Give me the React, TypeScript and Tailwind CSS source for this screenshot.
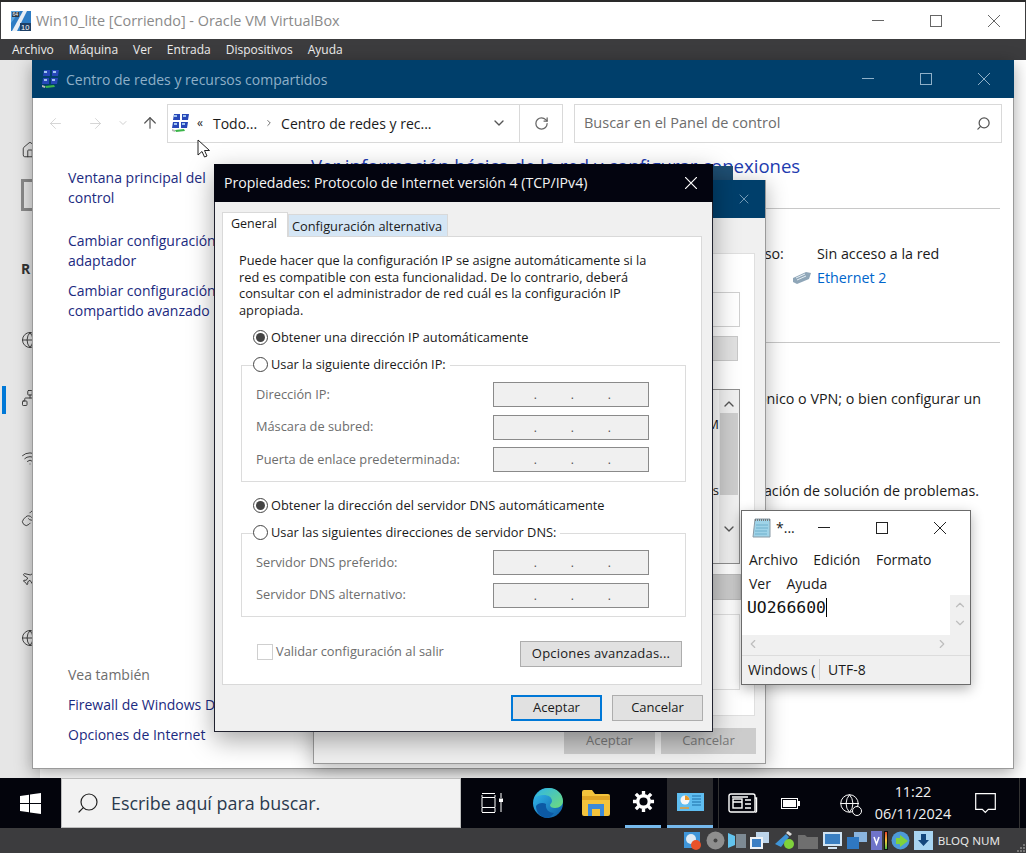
import React from 'react';
import { ArrowLeft, ArrowRight, ArrowUp, ChevronDown, ChevronUp, ChevronLeft, ChevronRight, RotateCw, X, Home, Globe, Wifi, Search, Plane, Network, Link } from 'lucide-react';

const NetIcon: React.FC = () => (
  <svg width="20" height="20" viewBox="0 0 20 20" className="shrink-0">
    <path d="M3 1h6v6H2z M11 1h7l-1 6h-6z M2 9h6v6H1z M10 9h7l-1 6h-6z" fill="#2747b8" />
    <path d="M3 2h3v2H3z M12 2h3v2h-3z M3 10h3v2H3z M11 10h3v2h-3z" fill="#9fc4f0" />
    <path d="M4 17l9-1 1 2-9 1z" fill="#3cb54a" />
    <path d="M1 16l3 1v2l-3-1z" fill="#b8b8b8" />
  </svg>
);

const VBoxIcon: React.FC = () => (
  <svg width="20" height="20" viewBox="0 0 20 20" className="shrink-0">
    <rect width="20" height="20" fill="#2d7cc4" />
    <path d="M0 0h9L0 12z" fill="#5aa5e0" />
    <path d="M12 0h4L6 20H1z" fill="#e8eef5" />
    <rect x="9" y="12" width="11" height="8" fill="#1d3f66" />
    <rect x="1" y="1" width="7" height="5" fill="#2b3a4a" />
    <text x="1.500" y="5.300" fontSize="5" fill="#fff" fontFamily="Liberation Sans">64</text>
    <text x="10" y="19" fontSize="7.500" fill="#fff" fontFamily="Liberation Sans">10</text>
  </svg>
);

// Sharp-cornered caption buttons: lucide's Square is rounded, Windows' is not.
const WinControls: React.FC<{ color: string; className?: string }> = ({ color, className }) => (
  <div className={`flex items-center gap-[46px] ${className ?? ''}`}>
    <svg width="12" height="12" viewBox="0 0 12 12" fill="none" stroke={color}><path d="M0 5.500h12" /></svg>
    <svg width="12" height="12" viewBox="0 0 12 12" fill="none" stroke={color}><rect x=".5" y=".5" width="11" height="11" /></svg>
    <svg width="12" height="12" viewBox="0 0 12 12" fill="none" stroke={color}><path d="M0 0l12 12M12 0L0 12" /></svg>
  </div>
);

const Cursor: React.FC = () => (
  <svg width="14" height="20" viewBox="0 0 14 20" className="absolute left-[197px] top-[139px] z-40">
    <path d="M1 1v15l4-3.500 2.500 5.500 2.500-1-2.500-5.500h5z" fill="#fff" stroke="#222" strokeWidth="1" />
  </svg>
);

const Radio: React.FC<{ on?: boolean; label: string }> = ({ on, label }) => (
  <div className="flex items-center h-[17px] bg-white pr-1 w-fit">
    <span className="w-[15px] h-[15px] rounded-full border border-[#444] bg-white flex items-center justify-center mr-[3px]">
      {on && <span className="w-[9px] h-[9px] rounded-full bg-[#444]" />}
    </span>
    <span className="text-[12.800px] text-[#1a1a1a] whitespace-nowrap">{label}</span>
  </div>
);

const IpField: React.FC<{ label: string }> = ({ label }) => (
  <div className="flex items-center justify-between h-[25px]">
    <span className="text-[12.800px] text-[#6d6d6d] whitespace-nowrap">{label}</span>
    <div className="w-[156px] h-[25px] border border-[#8a8a8a] bg-[#f0f0f0] grid grid-cols-4 pl-[6px]">
      {[0, 1, 2].map((i) => (
        <span key={i} className="justify-self-end text-[12px] text-[#555] leading-[24px]">.</span>
      ))}
    </div>
  </div>
);

const DialogButton: React.FC<{ label: string; primary?: boolean; className?: string }> = ({ label, primary, className }) => (
  <div
    className={`h-[26px] flex items-center justify-center bg-[#e1e1e1] text-[13px] text-[#1a1a1a] border ${
      primary ? 'border-2 border-[#0078d7]' : 'border-[#adadad]'
    } ${className ?? ''}`}
  >
    {label}
  </div>
);

const PropsDialog: React.FC = () => (
  <div className="absolute left-[214px] top-[164px] w-[499px] h-[568px] z-30 bg-[#f0f0f0] border border-[#20222e] border-t-0 shadow-[0_8px_24px_rgba(0,0,0,0.35)] flex flex-col">
    <div className="h-[38px] bg-[#03040f] text-white flex items-center justify-between pl-[10px] pr-[16px] pb-[1px] -mx-px shrink-0">
      <span className="text-[14.100px] whitespace-nowrap text-[#f4f4f4]">Propiedades: Protocolo de Internet versión 4 (TCP/IPv4)</span>
      <svg width="12" height="12" viewBox="0 0 12 12" fill="none" stroke="#fff" strokeWidth="1.200"><path d="M0 0l12 12M12 0L0 12" /></svg>
    </div>
    <div className="flex items-end pl-[7px] h-[34px] shrink-0">
      <div className="w-[66px] h-[25px] bg-white border border-[#d9d9d9] border-b-0 text-[12.500px] text-[#1a1a1a] pl-2 leading-[21px] relative top-px z-10">General</div>
      <div className="w-[160px] h-[22px] bg-[#d5e6f5] border border-[#d9d9d9] border-b-0 text-[12.800px] text-[#1a1a1a] pl-[3px] leading-[22px] whitespace-nowrap">Configuración alternativa</div>
    </div>
    <div className="ml-[7px] w-[480px] h-[449px] bg-white border border-[#d9d9d9] flex flex-col px-[16px] shrink-0">
      <p className="mt-[15px] text-[12.800px] leading-[16.500px] text-[#1a1a1a] whitespace-nowrap">
        Puede hacer que la configuración IP se asigne automáticamente si la<br />
        red es compatible con esta funcionalidad. De lo contrario, deberá<br />
        consultar con el administrador de red cuál es la configuración IP<br />
        apropiada.
      </p>
      <div className="mt-[11px] ml-[14px]"><Radio on label="Obtener una dirección IP automáticamente" /></div>
      <div className="mt-[10px] ml-[14px] relative z-10"><Radio label="Usar la siguiente dirección IP:" /></div>
      <div className="-mt-[8px] ml-[2px] -mr-[1px] h-[117px] border border-[#dcdcdc] pt-[16px] pl-[14px] pr-[36px] flex flex-col gap-[7.500px]">
        <IpField label="Dirección IP:" />
        <IpField label="Máscara de subred:" />
        <IpField label="Puerta de enlace predeterminada:" />
      </div>
      <div className="mt-[15px] ml-[14px]"><Radio on label="Obtener la dirección del servidor DNS automáticamente" /></div>
      <div className="mt-[10px] ml-[14px] relative z-10"><Radio label="Usar las siguientes direcciones de servidor DNS:" /></div>
      <div className="-mt-[8px] ml-[2px] -mr-[1px] h-[84px] border border-[#dcdcdc] pt-[16px] pl-[14px] pr-[36px] flex flex-col gap-[7.500px]">
        <IpField label="Servidor DNS preferido:" />
        <IpField label="Servidor DNS alternativo:" />
      </div>
      <div className="mt-[24px] ml-[18px] flex items-center justify-between mr-[3px]">
        <div className="flex items-center pb-[4px]">
          <span className="w-[16px] h-[16px] border border-[#cfcfcf] mr-[3px]" />
          <span className="text-[12.800px] text-[#6d6d6d]">Validar configuración al salir</span>
        </div>
        <DialogButton label="Opciones avanzadas..." className="w-[162px] tracking-[0.2px]" />
      </div>
    </div>
    <div className="flex justify-end gap-[10px] pr-[9px] mt-[10px]">
      <DialogButton primary label="Aceptar" className="w-[91px]" />
      <DialogButton label="Cancelar" className="w-[91px]" />
    </div>
  </div>
);

const BackWindow: React.FC = () => (
  <>
    <div className="absolute left-[700px] top-[166px] w-[33px] h-[16px] bg-[#1f5075] z-10" />
    <div className="absolute left-[313px] top-[180px] w-[453px] h-[584px] z-20 bg-[#f0f0f0] border border-[#9a9a9a] border-t-0 shadow-[0_4px_20px_rgba(0,0,0,0.3)] flex flex-col">
      <div className="h-[38px] bg-[#003f6b] flex items-center justify-end pr-[13px] shrink-0">
        <X size={16} strokeWidth={1.200} className="text-[#8fb0c8]" />
      </div>
      <div className="mt-[35px] mr-[10px] h-[463px] bg-white border border-[#dfdfdf] pr-[14px] flex flex-col items-end shrink-0">
        <div className="mt-[38px] w-[300px] h-[35px] border border-[#d0d0d0]" />
        <div className="mt-[9px] mr-[2px] w-[60px] h-[25px] bg-[#e1e1e1] border border-[#c8c8c8] text-[11px] text-[#555] text-center leading-[20px]">...</div>
        <div className="mt-[28px] w-[300px] h-[175px] border border-[#8f8f8f] bg-white flex justify-end">
          <div className="flex-1 flex flex-col items-end pt-[25px] text-[13px] text-[#1a1a1a] whitespace-nowrap">
            <span>Redes M</span>
            <span className="mt-[46px]">topologías</span>
          </div>
          <div className="w-[20px] bg-[#f0f0f0] flex flex-col items-center pt-[6px] shrink-0">
            <ChevronUp size={16} className="text-[#555]" />
            <div className="w-[18px] h-[82px] bg-[#cdcdcd] mt-[1px]" />
            <div className="flex-1" />
            <ChevronDown size={16} className="text-[#555] mb-[26px]" />
          </div>
        </div>
        <div className="mt-[10px] -mr-[1px] w-[300px] h-[26px] bg-[#cccccc] border border-[#bdbdbd]" />
        <div className="mt-[14px] w-[300px] h-[76px] border border-[#dfdfdf]" />
      </div>
      <div className="flex justify-end gap-[6px] pr-[9px] mt-[12px]">
        <div className="w-[91px] h-[26px] bg-[#cccccc] text-[13px] text-[#7a7a7a] flex items-center justify-center">Aceptar</div>
        <div className="w-[95px] h-[26px] bg-[#cccccc] text-[13px] text-[#7a7a7a] flex items-center justify-center">Cancelar</div>
      </div>
    </div>
  </>
);

const NetworkWindow: React.FC = () => (
  <div className="absolute left-[32px] top-[60px] w-[982px] h-[709px] z-0 bg-white border border-[#9a9a9a] border-t-0 shadow-[0_4px_16px_rgba(0,0,0,0.35)] flex flex-col">
    <div className="h-[38px] -mx-px bg-[#003f6b] flex items-center pl-[9px] shrink-0">
      <NetIcon />
      <span className="ml-[5px] text-[14px] text-[#8fb0c8] whitespace-nowrap">Centro de redes y recursos compartidos</span>
      <WinControls color="#8fb0c8" className="ml-auto pr-[24px]" />
    </div>
    <div className="h-[50px] flex items-center pl-[14px] shrink-0">
      <ArrowLeft size={17} strokeWidth={1.200} className="text-[#cfcfcf]" />
      <ArrowRight size={17} strokeWidth={1.200} className="text-[#cfcfcf] ml-[23px]" />
      <ChevronDown size={12} className="text-[#cfcfcf] ml-[13px]" />
      <ArrowUp size={18} strokeWidth={1.600} className="text-[#555] ml-[12px]" />
      <div className="ml-[8px] w-[353px] h-[39px] border border-[#d9d9d9] flex items-center pl-[3px] pr-[12px] text-[14px] text-[#1a1a1a]">
        <NetIcon />
        <span className="ml-[6px] text-[12px]">«</span>
        <span className="ml-[10px]">Todo...</span>
        <ChevronRight size={10} className="mx-[7px] text-[#555]" />
        <span className="whitespace-nowrap">Centro de redes y rec...</span>
        <ChevronDown size={16} className="ml-auto text-[#555]" />
      </div>
      <div className="w-[43px] h-[39px] border border-[#d9d9d9] border-l-0 flex items-center justify-center">
        <RotateCw size={15} className="text-[#666]" />
      </div>
      <div className="ml-[11px] w-[428px] h-[39px] border border-[#d9d9d9] flex items-center justify-between pl-[9px] pr-[10px]">
        <span className="text-[14.500px] text-[#6d6d6d]">Buscar en el Panel de control</span>
        <Search size={15} className="text-[#555] -scale-x-100" />
      </div>
    </div>
    <div className="flex flex-1">
      <div className="w-[278px] pl-[35px] pt-[20px] flex flex-col text-[14px] leading-[20px] text-[#1b2a80] shrink-0">
        <span className="whitespace-nowrap">Ventana principal del<br />control</span>
        <span className="mt-[23px] whitespace-nowrap">Cambiar configuración<br />adaptador</span>
        <span className="mt-[10px] whitespace-nowrap">Cambiar configuración<br />compartido avanzado</span>
        <span className="mt-auto text-[#6d6d6d]">Vea también</span>
        <span className="mt-[10px] whitespace-nowrap">Firewall de Windows D</span>
        <span className="mt-[10px] mb-[23px]">Opciones de Internet</span>
      </div>
      <div className="flex-1 flex flex-col pr-[13px] text-[14.300px] text-[#1a1a1a] pt-[6px]">
        <h1 className="text-[18.560px] leading-[24px] text-[#1d3bb0] whitespace-nowrap font-normal">Ver información básica de la red y configurar conexiones</h1>
        <div className="mt-[30px] h-px bg-[#c8c8c8]" />
        <div className="mt-[35px] flex h-[20px] items-center">
          <span className="ml-[371px] w-[135px] whitespace-nowrap">Tipo de acceso:</span>
          <span>Sin acceso a la red</span>
        </div>
        <div className="mt-[4px] flex h-[20px] items-center pl-[481px]">
          <svg width="20" height="14" viewBox="0 0 20 14" className="mr-[5px]">
            <path d="M1 7l13-6 5 1-2 6-12 5-4-2z" fill="#8fa6b8" />
            <path d="M4 7l9-4M5 9l9-4" stroke="#e6eef3" />
          </svg>
          <span className="text-[#0066cc]">Ethernet 2</span>
        </div>
        <div className="mt-[54px] h-px bg-[#c8c8c8]" />
        <div className="mt-[45px] h-[20px] flex justify-end whitespace-nowrap pr-[19px]">
          telefónico o VPN; o bien configurar un
        </div>
        <div className="mt-[72px] h-[20px] flex justify-end whitespace-nowrap pr-[21px]">
          información de solución de problemas.
        </div>
      </div>
    </div>
  </div>
);

const Notepad: React.FC = () => (
  <div className="absolute left-[741px] top-[510px] w-[230px] h-[175px] z-30 bg-[#f0f0f0] border border-[#6b6b6b] shadow-[0_4px_12px_rgba(0,0,0,0.3)] flex flex-col">
    <div className="h-[33px] bg-white flex items-center pl-[10px] shrink-0">
      <svg width="20" height="22" viewBox="0 0 20 22">
        <path d="M3 2h15v18H1z" fill="#9fd3e8" stroke="#8a9aa5" />
        <path d="M3 3h15" stroke="#777" strokeWidth="2" strokeDasharray="1 1" />
        <path d="M4 8h12M4 11h12M3 14h12M3 17h12" stroke="#6fb0cc" />
      </svg>
      <span className="ml-[4px] text-[14px] text-[#1a1a1a]">*...</span>
      <WinControls color="#222" className="ml-auto pr-[24px]" />
    </div>
    <div className="bg-white flex flex-col text-[14px] text-[#1a1a1a] pl-[7px] pt-[3px] shrink-0">
      <div className="h-[24px] flex items-center gap-[15.500px]"><span>Archivo</span><span>Edición</span><span>Formato</span></div>
      <div className="h-[24px] flex items-center gap-[15.500px]"><span>Ver</span><span>Ayuda</span></div>
    </div>
    <div className="h-[40px] flex shrink-0">
      <div className="flex-1 bg-white pl-[5px] font-['DejaVu_Sans_Mono',monospace] text-[16.400px] leading-[25px] text-[#111]">
        <span className="border-r border-black">UO266600</span>
      </div>
      <div className="w-[20px] flex flex-col items-center pt-[3px] text-[#bdbdbd]">
        <ChevronUp size={14} />
        <ChevronDown size={14} className="mt-[4px]" />
      </div>
    </div>
    <div className="h-[21px] flex items-center justify-between pl-[4px] pr-[1px] pb-[3px] text-[#bdbdbd] border-b border-[#dcdcdc] shrink-0">
      <ChevronLeft size={14} />
      <ChevronRight size={14} className="mr-[20px]" />
    </div>
    <div className="flex-1 flex items-center text-[14px] text-[#1a1a1a] pl-[6px] pb-[2px]">
      <span className="w-[72px] whitespace-nowrap border-r border-[#d0d0d0]">Windows (</span>
      <span className="ml-[8px]">UTF-8</span>
    </div>
  </div>
);

const SideIcons: React.FC = () => (
  <div className="absolute left-0 top-[60px] w-[40px] h-[718px] bg-[#e6e6e6] flex flex-col pl-[21px] text-[#333]">
    <Home size={18} strokeWidth={1.200} className="mt-[81px] shrink-0" />
    <div className="mt-[20px] w-[40px] h-[32px] border-[3px] border-[#8a8a8a] shrink-0" />
    <span className="mt-[47px] font-bold text-[14px] h-[20px] shrink-0">R</span>
    <Globe size={18} strokeWidth={1.200} className="mt-[53px] shrink-0" />
    <Network size={18} strokeWidth={1.200} className="mt-[40px] shrink-0" />
    <Wifi size={18} strokeWidth={1.200} className="mt-[42px] shrink-0" />
    <Link size={18} strokeWidth={1.200} className="mt-[42px] shrink-0" />
    <Plane size={18} strokeWidth={1.200} className="mt-[42px] shrink-0" />
    <Globe size={18} strokeWidth={1.200} className="mt-[42px] shrink-0" />
  </div>
);

const Taskbar: React.FC = () => (
  <div className="h-[50px] bg-[#03040c] flex items-stretch text-white relative z-40 shrink-0">
    <div className="w-[61px] flex items-center justify-center">
      <svg width="21" height="21" viewBox="0 0 21 21"><path d="M0 3l9-1.300v8.300H0zM10 1.500L21 0v10H10zM0 11h9v8.300L0 18zM10 11h11v10l-11-1.500z" fill="#fff" /></svg>
    </div>
    <div className="w-[400px] bg-[#f2f2f2] border border-[#bdbdbd] flex items-center pl-[14px]">
      <Search size={24} strokeWidth={1.200} className="text-[#222] -scale-x-100" />
      <span className="ml-[11px] text-[17.900px] text-[#2b3a4d] whitespace-nowrap">Escribe aquí para buscar.</span>
    </div>
    <div className="w-[59px] flex items-center justify-center pl-[2px]">
      <svg width="22" height="20" viewBox="0 0 22 20" fill="none" stroke="#fff">
        <path d="M1 .5h13M1 4.500h13v10H1zM1 19.500h13M1 2v2M14 2v2M1 15v4M14 15v4M20 0v5M20 9v10" />
        <rect x="18.500" y="6" width="3" height="2.500" fill="#fff" />
      </svg>
    </div>
    <div className="w-[46px] flex items-center justify-center ml-[5px]">
      <svg width="32" height="32" viewBox="0 0 32 32">
        <defs>
          <linearGradient id="edgeA" x1="0" y1="0" x2="1" y2="1"><stop offset="0" stopColor="#35c1f1" /><stop offset="1" stopColor="#0c59a4" /></linearGradient>
          <linearGradient id="edgeB" x1="0" y1="0" x2="1" y2="1"><stop offset="0" stopColor="#2fb5e8" /><stop offset="1" stopColor="#6fdc7a" /></linearGradient>
        </defs>
        <circle cx="16" cy="16" r="15" fill="url(#edgeA)" />
        <path d="M3 11C6 4 12 1 17 1c8 0 14 6 14 13 0 4-3 7-8 7-3 0-5-1-5-3 0-1 2-2 2-4 0-4-4-6-8-6-4 0-8 1-9 3z" fill="url(#edgeB)" />
        <path d="M14 17c-1 5 3 9 8 9-2 3-5 5-8 5-6-1-10-6-10-12 2-3 7-4 10-2z" fill="#0c59a4" />
      </svg>
    </div>
    <div className="w-[50px] flex items-center justify-center">
      <svg width="28" height="26" viewBox="0 0 28 26">
        <path d="M0 2a2 2 0 012-2h8l3 4h13a2 2 0 012 2v18a2 2 0 01-2 2H2a2 2 0 01-2-2z" fill="#f3c33c" />
        <path d="M0 6h28v4H0z" fill="#e0a526" />
        <path d="M6 14h16v12h-4v-7h-8v7H6z" fill="#3b8ad9" />
      </svg>
    </div>
    <div className="w-[36px] ml-[4px] flex items-center justify-center border-b-[3px] border-[#76b9ed]">
      <svg width="23" height="23" viewBox="0 0 24 24" fill="none" stroke="#fff" strokeWidth="3.500">
        <circle cx="12" cy="12" r="6" />
        <path d="M12 1v4M12 19v4M1 12h4M19 12h4M4 4l3 3M17 17l3 3M20 4l-3 3M7 17l-3 3" />
      </svg>
    </div>
    <div className="w-[46px] ml-[6px] flex items-center justify-center bg-[#2b2b2e] border-b-[3px] border-[#76b9ed]">
      <svg width="27" height="18" viewBox="0 0 27 18">
        <rect width="27" height="18" fill="#5fbdf0" />
        <circle cx="8" cy="7" r="4.500" fill="#f6f6f6" />
        <path d="M8 7V2.500A4.500 4.500 0 0112.500 7z" fill="#e89a2b" />
        <path d="M15 3h9M15 6h9M15 9h9M15 12h9" stroke="#1c6ea8" />
        <path d="M3 15h9" stroke="#e89a2b" strokeWidth="1.500" />
      </svg>
    </div>
    <div className="w-[6px] flex justify-end"><div className="w-px bg-[#333]" /></div>
    <div className="w-[46px] flex items-center justify-center ml-[1px]">
      <svg width="30" height="20" viewBox="0 0 30 20" fill="none" stroke="#fff" strokeWidth="1.400">
        <path d="M1 3a2 2 0 012-2h22a2 2 0 012 2v15a1 1 0 01-1 1H3a2 2 0 01-2-2z" />
        <path d="M27 5h1.500v13a1 1 0 01-1.500 1" />
        <rect x="5" y="6" width="9" height="9" />
        <path d="M4 4h16M5 9h9M17 7h6M17 11h6M17 15h6" />
      </svg>
    </div>
    <div className="w-[46px] flex items-center justify-center ml-[1px]">
      <svg width="19" height="11" viewBox="0 0 19 11"><rect x=".5" y=".5" width="16" height="10" fill="none" stroke="#fff" /><rect x="2" y="2" width="13" height="7" fill="#fff" /><rect x="17" y="3" width="2" height="5" fill="#fff" /></svg>
    </div>
    <div className="w-[72px] flex items-center justify-center">
      <div className="relative">
        <Globe size={21} strokeWidth={1.100} />
        <span className="absolute right-[-2px] bottom-[-2px] w-[10px] h-[10px] rounded-full border border-white bg-[#03040c]" />
      </div>
    </div>
    <div className="w-[76px] -ml-[10px] flex flex-col items-center justify-center text-[14.400px] leading-[22px] text-[#f0f0f0]">
      <span>11:22</span>
      <span>06/11/2024</span>
    </div>
    <div className="flex-1 flex items-center justify-center border-r border-[#333] mr-[6px]">
      <svg width="21" height="21" viewBox="0 0 21 21" fill="none" stroke="#fff" strokeWidth="1.200"><path d="M.7.7h19.600v15.600h-7l-3 3-3-3h-6.600z" /></svg>
    </div>
  </div>
);

const StatusBar: React.FC = () => (
  <div className="h-[25px] bg-[#3c3c3e] flex items-center justify-end pr-[26px] gap-[3px] text-[#e6e6e6] relative z-40 shrink-0">
    <svg width="18" height="18" viewBox="0 0 18 18"><rect width="16" height="16" fill="#3f95d8" /><circle cx="7" cy="7" r="5" fill="#dfeaf3" /><circle cx="12" cy="13" r="5" fill="#e8532b" /></svg>
    <svg width="19" height="19" viewBox="0 0 19 19" className="ml-[1px]"><circle cx="9.500" cy="9.500" r="9" fill="#8e8e8e" /><circle cx="9.500" cy="9.500" r="2" fill="#444" /></svg>
    <svg width="19" height="19" viewBox="0 0 19 19"><path d="M0 2l7 3v9l-7 3z" fill="#62c3ee" /><path d="M8 3h10v14H8z" fill="#7d8a94" /></svg>
    <svg width="19" height="17" viewBox="0 0 19 17"><rect x="6" y="0" width="13" height="11" fill="#bcd4ea" /><rect x="0" y="5" width="13" height="12" fill="#eef2f6" /><rect x="2" y="7" width="9" height="8" fill="#3c7fc4" /></svg>
    <svg width="20" height="19" viewBox="0 0 20 19" className="ml-[3px]"><path d="M0 13L11 3l3 3L6 16z" fill="#3f95d8" /><circle cx="14" cy="13" r="5" fill="#7fd23c" /><path d="M13 0l4 3-2 2-4-3z" fill="#ddd" /></svg>
    <svg width="20" height="16" viewBox="0 0 20 16"><path d="M0 2h7l2 2h11v12H0z" fill="#6f6f6f" /></svg>
    <svg width="19" height="17" viewBox="0 0 19 17" className="ml-[2px]"><rect width="19" height="14" fill="#cfe3f3" /><rect x="2" y="2" width="15" height="10" fill="#3a7fc2" /><rect x="5" y="15" width="9" height="2" fill="#cfe3f3" /></svg>
    <svg width="20" height="17" viewBox="0 0 20 17" className="ml-[2px]"><rect x="7" y="0" width="13" height="10" fill="#8ab4de" /><rect x="0" y="5" width="12" height="12" fill="#2f78c2" /></svg>
    <svg width="11" height="19" viewBox="0 0 11 19" className="ml-[1px]"><rect width="11" height="19" fill="#6f74c9" /><path d="M3 6l2.500 7L8 6" fill="none" stroke="#fff" strokeWidth="1.500" /></svg>
    <div className="w-[4px] h-[19px] bg-gradient-to-b from-[#e53b2a] via-[#f3c33c] to-[#3cc24a] -ml-[1px] border border-[#111]" />
    <svg width="20" height="19" viewBox="0 0 20 19"><circle cx="9.500" cy="9.500" r="9" fill="#4d9ad8" /><path d="M9 4l8 6-8 6v-3H5V7h4z" fill="#7fd23c" /></svg>
    <svg width="19" height="19" viewBox="0 0 19 19"><rect width="19" height="19" fill="#a9d5f2" /><path d="M7 3h5v6h3l-5.500 6L4 9h3z" fill="#14477d" /></svg>
    <span className="ml-[2px] text-[11.600px] whitespace-nowrap font-['Noto_Sans',sans-serif]">BLOQ NUM</span>
    <svg width="8" height="10" viewBox="0 0 8 10" className="absolute right-[1px] bottom-0" fill="#777">
      <path d="M6 1h2v2H6zM3 4h2v2H3zM6 4h2v2H6zM0 7h2v2H0zM3 7h2v2H3zM6 7h2v2H6z" />
    </svg>
  </div>
);

export default function App() {
  return (
    <div className="relative w-[1026px] h-[853px] overflow-hidden bg-[#3c3c3e] font-['Open_Sans',sans-serif] flex flex-col">
      <div className="h-[2px] bg-[#2a2a2a] shrink-0" />
      <div className="h-[37px] bg-white flex items-center pl-[10px] mx-[1px] shrink-0">
        <VBoxIcon />
        <span className="ml-[5px] text-[14.400px] text-[#8a8a8a] whitespace-nowrap">Win10_lite [Corriendo] - Oracle VM VirtualBox</span>
        <WinControls color="#666" className="ml-auto pr-[25px]" />
      </div>
      <div className="h-[21px] flex items-center gap-[15px] pl-[12px] text-[12px] text-[#f0f0f0] shrink-0">
        <span>Archivo</span><span>Máquina</span><span>Ver</span><span>Entrada</span><span>Dispositivos</span><span>Ayuda</span>
      </div>
      <div className="flex-1 relative bg-white" />
      <Taskbar />
      <StatusBar />
      <SideIcons />
      <div className="absolute left-[2px] top-[386px] w-[4px] h-[28px] bg-[#0078d7]" />
      <NetworkWindow />
      <BackWindow />
      <PropsDialog />
      <Notepad />
      <Cursor />
    </div>
  );
}
